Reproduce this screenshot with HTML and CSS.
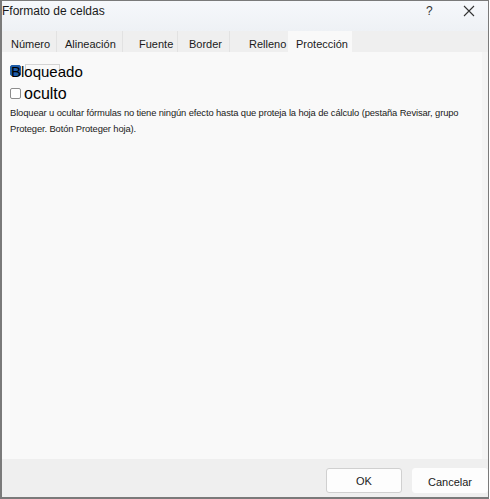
FILE: index.html
```html
<!DOCTYPE html>
<html lang="es">
<head>
<meta charset="utf-8">
<title>Formato de celdas</title>
<link rel="stylesheet" href="styles.css">
</head>
<body>
<div class="dialog">
  <div class="titlebar">
    <span class="title">Fformato de celdas</span>
    <span class="help">?</span>
    <span class="close"><svg width="12" height="12" viewBox="0 0 12 12"><path d="M1 1L11 11M11 1L1 11" stroke="#333" stroke-width="1.1" fill="none"/></svg></span>
  </div>
  <div class="tabs">
    <div class="tab t1">Número</div>
    <div class="tab t2">Alineación</div>
    <div class="tab t3">Fuente</div>
    <div class="tab t4">Border</div>
    <div class="tab t5">Relleno</div>
    <div class="tab active">Protección</div>
  </div>
  <div class="content">
    <div class="row first">
      <span class="cb checked"></span>
      <span class="ghost"></span>
      <span class="lbl lbl1">Bloqueado</span>
    </div>
    <div class="row second">
      <span class="cb"></span>
      <span class="lbl lbl2">oculto</span>
    </div>
    <p class="desc">Bloquear u ocultar fórmulas no tiene ningún efecto hasta que proteja la hoja de cálculo (pestaña Revisar, grupo Proteger. Botón Proteger hoja).</p>
  </div>
  <div class="footer">
    <button class="btn ok">OK</button>
    <button class="btn cancel">Cancelar</button>
  </div>
</div>
</body>
</html>
```
FILE: styles.css
```css
html, body {
  margin: 0;
  padding: 0;
  background: #ffffff;
}
body {
  width: 490px;
  height: 499px;
  font-family: "Liberation Sans", Arial, sans-serif;
}
.dialog {
  box-sizing: border-box;
  width: 489px;
  height: 499px;
  border: 1px solid #7a7a7a;
  border-left-width: 2px;
  border-bottom-width: 2px;
  display: flex;
  flex-direction: column;
  background: #f9f9f9;
}
.titlebar {
  height: 30px;
  display: flex;
  align-items: center;
  background: linear-gradient(#f6f8fb, #eef1f5);
  font-size: 12px;
  color: #1a1a1a;
}
.title {
  margin-top: -10px;
  flex: 1;
}
.help {
  width: 24px;
  margin-top: -10px;
  font-size: 12px;
  color: #333;
}
.close {
  width: 38px;
  margin-top: -10px;
  display: flex;
  justify-content: center;
}
.tabs {
  height: 21px;
  display: flex;
  background: #efefef;
  font-size: 11px;
  color: #1a1a1a;
}
.tab {
  box-sizing: border-box;
  height: 21px;
  line-height: 26px;
  white-space: nowrap;
  border-right: 1px solid #e2e2e2;
}
.t1 { width: 55px; padding-left: 9px; }
.t2 { width: 66px; padding-left: 8px; }
.t3 { width: 55px; padding-left: 16px; }
.t4 { width: 52px; padding-left: 11px; }
.t5 { width: 58px; padding-left: 19px; border-right: none; }
.tab.active {
  width: 64px;
  padding-left: 8px;
  background: #f9f9f9;
  border-right: none;
}
.content {
  flex: 1;
  padding: 12px 0 0 8px;
  border-right: 6px solid #f4f4f4;
}
.row {
  position: relative;
  display: flex;
  align-items: flex-end;
}
.cb {
  box-sizing: border-box;
  width: 11px;
  height: 11px;
  border: 1px solid #8c8c8c;
  border-radius: 2px;
  background: #ffffff;
  margin-bottom: 4px;
}
.cb.checked {
  background: #1e5ca8;
  border-color: #1e5ca8;
  position: absolute;
  left: 0;
  top: 1px;
}
.ghost {
  position: absolute;
  left: 15px;
  top: 0;
  width: 33px;
  height: 10px;
  border: 1px solid #d4d4d4;
  border-bottom: none;
}
.lbl {
  color: #000;
  line-height: 18px;
}
.lbl1 {
  font-size: 15px;
  padding-left: 1px;
  position: relative;
}
.lbl2 {
  font-size: 16px;
  padding-left: 3px;
}
.first { height: 17px; }
.second { height: 22px; }
.desc {
  margin: 2px 0 0 0;
  width: 465px;
  font-size: 9.4px;
  letter-spacing: -0.12px;
  line-height: 16px;
  color: #1a1a1a;
}
.footer {
  height: 38px;
  background: #efefef;
  display: flex;
  justify-content: flex-end;
  align-items: flex-start;
  padding-top: 9px;
  box-sizing: border-box;
  gap: 10px;
}
.btn {
  box-sizing: border-box;
  width: 76px;
  height: 25px;
  background: #fdfdfd;
  border: 1px solid #d0d0d0;
  border-radius: 3px;
  font-family: "Liberation Sans", Arial, sans-serif;
  font-size: 11px;
  color: #1a1a1a;
  padding: 0;
}
.cancel {
  border-color: #fdfdfd;
  padding-top: 3px;
}
```
